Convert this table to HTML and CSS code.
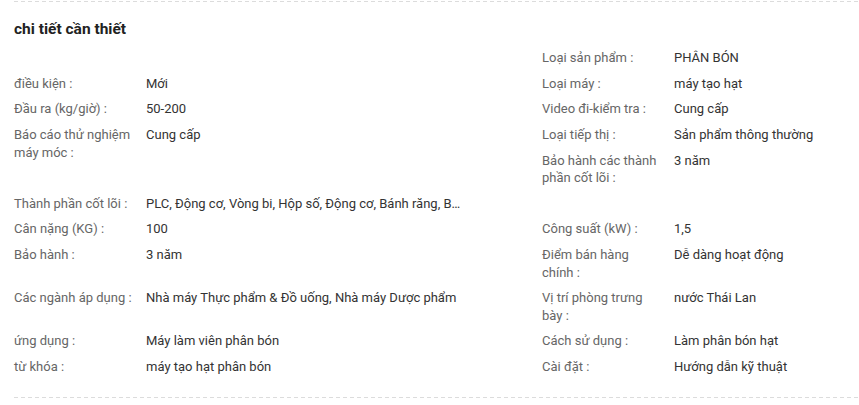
FILE: index.html
```html
<!DOCTYPE html>
<html lang="vi">
<head>
<meta charset="utf-8">
<link rel="stylesheet" href="styles.css">
</head>
<body>
<section class="detail">
  <h3 class="title">chi tiết cần thiết</h3>
  <div class="attrs">
    <div class="attr attr-empty"></div>
    <div class="attr"><span class="k">Loại sản phẩm&nbsp;:</span><span class="v">PHÂN BÓN</span></div>
    <div class="attr"><span class="k">điều kiện&nbsp;:</span><span class="v">Mới</span></div>
    <div class="attr"><span class="k">Loại máy&nbsp;:</span><span class="v">máy tạo hạt</span></div>
    <div class="attr"><span class="k">Đầu ra (kg/giờ)&nbsp;:</span><span class="v">50-200</span></div>
    <div class="attr"><span class="k">Video đi-kiểm tra&nbsp;:</span><span class="v">Cung cấp</span></div>
    <div class="attr"><span class="k">Báo cáo thử nghiệm máy móc&nbsp;:</span><span class="v">Cung cấp</span></div>
    <div class="attr"><span class="k">Loại tiếp thị&nbsp;:</span><span class="v">Sản phẩm thông thường</span></div>
    <div class="attr"><span class="k">Bảo hành các thành phần cốt lõi&nbsp;:</span><span class="v">3 năm</span></div>
    <div class="attr attr-wide"><span class="k">Thành phần cốt lõi&nbsp;:</span><span class="v v-clip">PLC, Động cơ, Vòng bi, Hộp số, Động cơ, Bánh răng, Bơm, Bình chịu áp lực</span></div>
    <div class="attr"><span class="k">Cân nặng (KG)&nbsp;:</span><span class="v">100</span></div>
    <div class="attr"><span class="k">Công suất (kW)&nbsp;:</span><span class="v">1,5</span></div>
    <div class="attr"><span class="k">Bảo hành&nbsp;:</span><span class="v">3 năm</span></div>
    <div class="attr"><span class="k">Điểm bán hàng chính&nbsp;:</span><span class="v">Dễ dàng hoạt động</span></div>
    <div class="attr"><span class="k">Các ngành áp dụng&nbsp;:</span><span class="v">Nhà máy Thực phẩm &amp; Đồ uống, Nhà máy Dược phẩm</span></div>
    <div class="attr"><span class="k">Vị trí phòng trưng bày&nbsp;:</span><span class="v">nước Thái Lan</span></div>
    <div class="attr"><span class="k">ứng dụng&nbsp;:</span><span class="v">Máy làm viên phân bón</span></div>
    <div class="attr"><span class="k">Cách sử dụng&nbsp;:</span><span class="v">Làm phân bón hạt</span></div>
    <div class="attr"><span class="k">từ khóa&nbsp;:</span><span class="v">máy tạo hạt phân bón</span></div>
    <div class="attr"><span class="k">Cài đặt&nbsp;:</span><span class="v">Hướng dẫn kỹ thuật</span></div>
  </div>
</section>
</body>
</html>
```
FILE: styles.css
```css
html, body {
  margin: 0;
  padding: 0;
  background: #fff;
  overflow: hidden;
}
body {
  font-family: Roboto, "Noto Sans", Arial, sans-serif;
  font-size: 13px;
  color: #333;
}
.detail {
  margin: 1px 0 0 14px;
  width: 1056px;
  padding-bottom: 18px;
  background:
    repeating-linear-gradient(90deg, #dcdcdc 0 4px, transparent 4px 7px) top left / 100% 1px no-repeat,
    repeating-linear-gradient(90deg, #dcdcdc 0 4px, transparent 4px 7px) bottom left / 100% 1px no-repeat;
}
.title {
  margin: 0;
  padding-top: 18px;
  font-size: 15.5px;
  line-height: 20px;
  font-weight: 700;
  color: #222;
}
.attrs {
  margin-top: 6.2px;
  display: flow-root;
}
.attr {
  float: left;
  width: 528px;
  display: flex;
  padding: 4px 0;
  line-height: 17.6px;
}
.attr-wide {
  width: 100%;
}
.attr-empty {
  height: 17.6px;
}
.k {
  flex: none;
  width: 122px;
  margin-right: 10px;
  color: #666;
}
.v {
  width: 360px;
  white-space: nowrap;
  overflow: hidden;
  text-overflow: ellipsis;
  color: #333;
}
.v-clip {
  width: 321px;
}
```
